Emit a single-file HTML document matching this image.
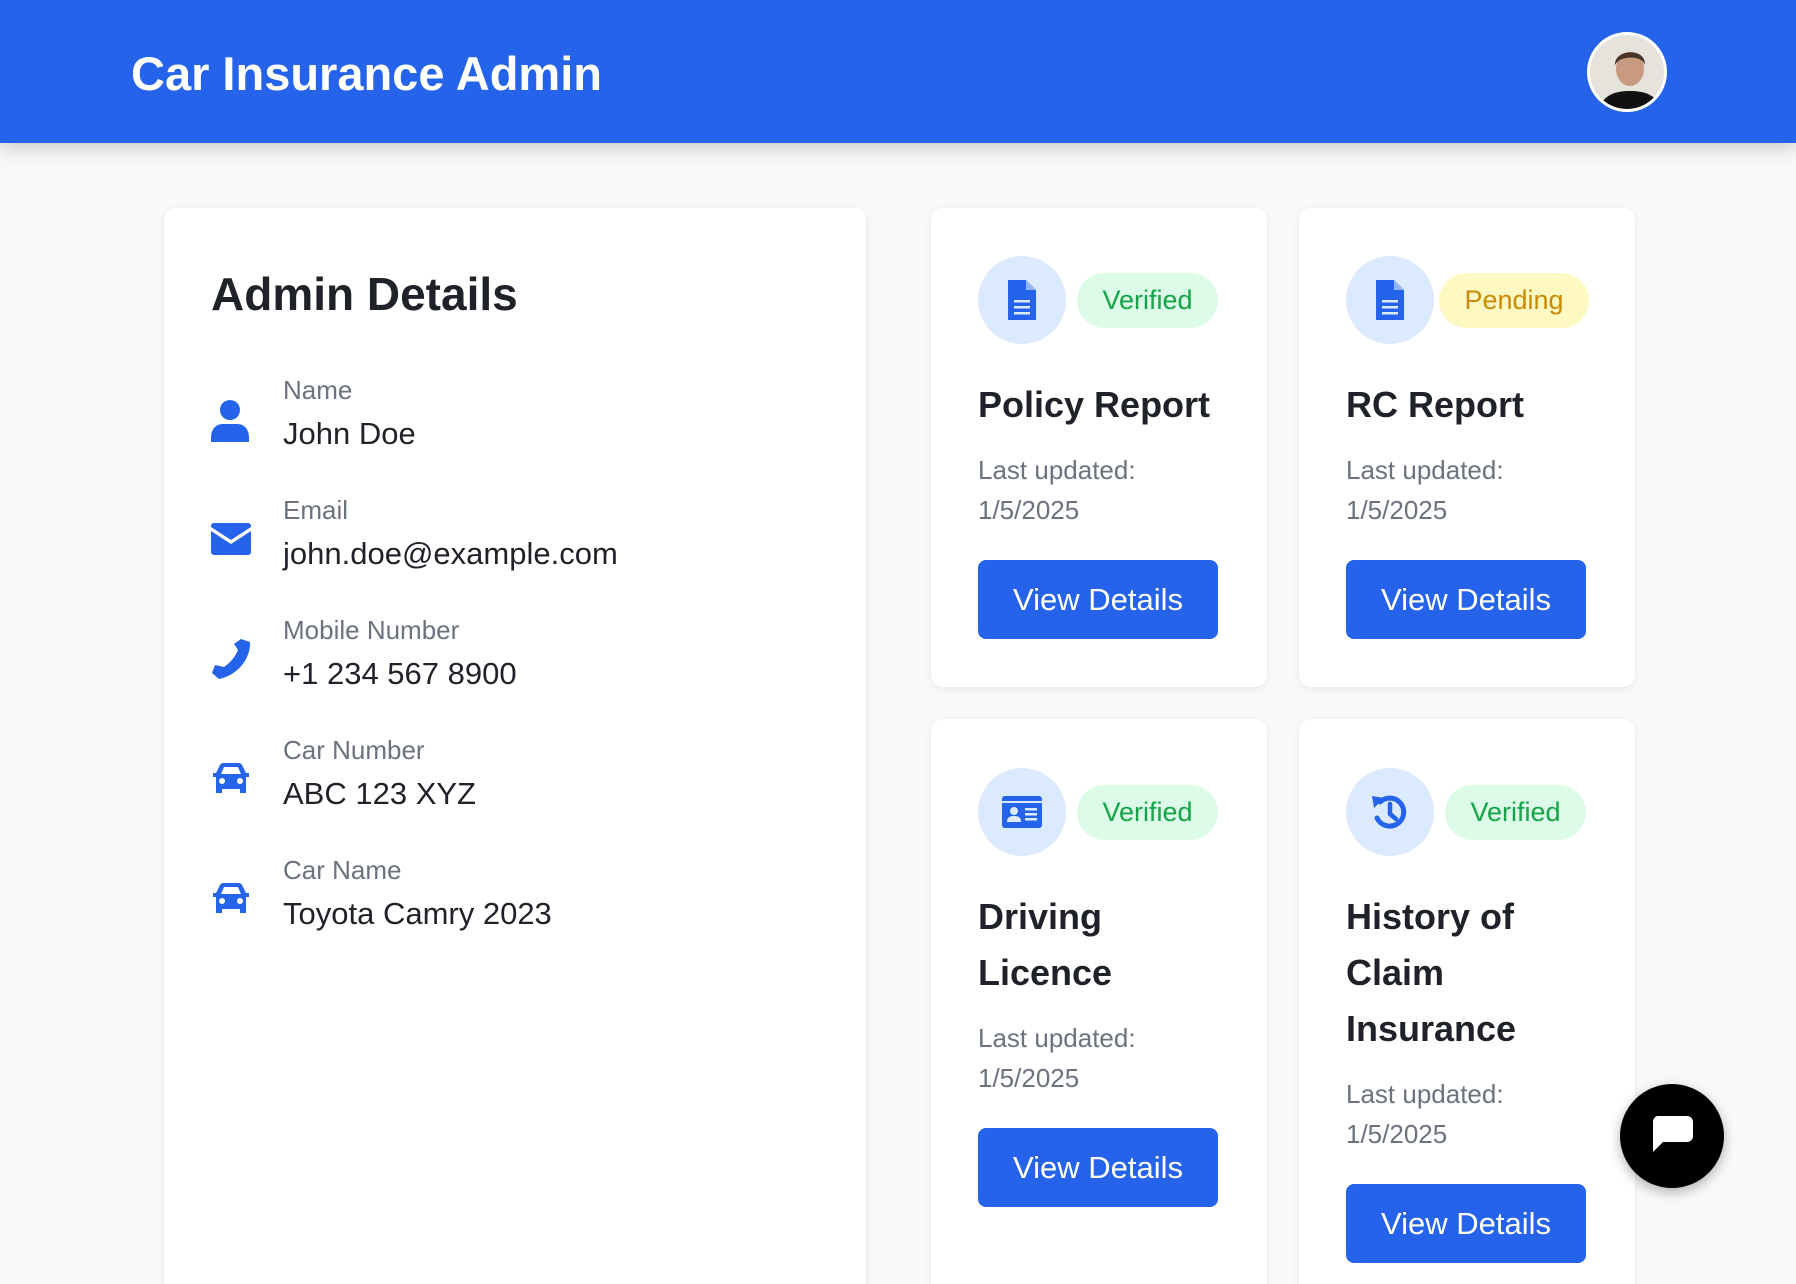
<!DOCTYPE html>
<html><head><meta charset="utf-8"><style>
*{margin:0;padding:0;box-sizing:border-box}
html,body{width:1796px;height:1284px;overflow:hidden}
body{background:#f8f9fb;font-family:"Liberation Sans",sans-serif;position:relative;color:#1f2329}
.hdr{position:absolute;left:0;top:0;width:1796px;height:143px;background:#2563eb;box-shadow:0 6px 18px rgba(0,0,0,.18)}
.hdr h1{position:absolute;left:131px;top:46px;color:#fff;font-size:47px;font-weight:bold;line-height:56px}
.av{position:absolute;left:1587px;top:32px;width:80px;height:80px;border-radius:50%;border:3px solid #fff;background:#e8e4df;overflow:hidden}
.card{position:absolute;background:#fff;border-radius:12px;box-shadow:0 2px 8px rgba(0,0,0,.08)}
.ad h2{position:absolute;left:47px;top:58px;font-size:46px;font-weight:600;line-height:56px}
.row{position:absolute;left:47px}
.row svg{position:absolute;left:0;fill:#2563eb}
.lab{position:absolute;left:72px;font-size:26px;color:#6b7280;white-space:nowrap}
.val{position:absolute;left:72px;font-size:31px;color:#1f2329;white-space:nowrap}
.ic{position:absolute;left:47px;width:88px;height:88px;border-radius:50%;background:#dbeafe}
.ic svg{position:absolute;left:22px;top:22px;fill:#2563eb}
.bd{position:absolute;left:146px;height:55px;border-radius:28px;font-size:27px;line-height:55px;text-align:center;width:141px}
.ok{background:#dcfce7;color:#16a34a}
.pd{background:#fef9c3;color:#ca8a04}
.t{position:absolute;left:47px;font-size:36px;font-weight:600;line-height:56px}
.u{position:absolute;left:47px;font-size:26px;color:#6b7280;line-height:40px}
.btn{position:absolute;left:47px;width:240px;height:79px;background:#2563eb;border-radius:8px;color:#fff;font-size:31px;line-height:79px;text-align:center}
.chat{position:absolute;left:1620px;top:1084px;width:104px;height:104px;border-radius:50%;background:#000;box-shadow:0 4px 12px rgba(0,0,0,.3)}
</style></head><body>
<div class="hdr"><h1>Car Insurance Admin</h1>
<div class="av"><svg width="80" height="80" viewBox="0 0 80 80"><rect width="80" height="80" fill="#e6e2dc"/><path d="M8 80 C10 60 25 56 40 56 C55 56 70 60 72 80Z" fill="#111"/><ellipse cx="40" cy="34" rx="14" ry="17" fill="#c99a82"/><path d="M25 30 C24 14 56 12 55 30 C52 20 30 20 25 30Z" fill="#4a3427"/></svg></div></div>

<div class="card ad" style="left:164px;top:208px;width:702px;height:1090px">
<h2>Admin Details</h2>
<div class="row" style="top:167px"><svg style="top:25px" width="38" height="42" viewBox="0 0 38 42"><circle cx="19" cy="10" r="10"/><path d="M0 38 C0 28 6 24 12 24 H26 C32 24 38 28 38 38 V42 H0Z"/></svg><div class="lab" style="top:0">Name</div><div class="val" style="top:41px">John Doe</div></div>
<div class="row" style="top:287px"><svg style="top:28px" width="40" height="32" viewBox="0 0 40 32"><path d="M3 0H37A3 3 0 0 1 40 3V4L20 17L0 4V3A3 3 0 0 1 3 0Z"/><path d="M0 8L20 21L40 8V29A3 3 0 0 1 37 32H3A3 3 0 0 1 0 29Z"/></svg><div class="lab" style="top:0">Email</div><div class="val" style="top:41px">john.doe@example.com</div></div>
<div class="row" style="top:407px"><svg style="top:24px" width="40" height="40" viewBox="0 0 40 40"><path d="M30 0 L39 3 C40 18 28 36 8 40 L1 34 L4 26 L13 28 C20 23 24 18 27 11 L23 5Z"/></svg><div class="lab" style="top:0">Mobile Number</div><div class="val" style="top:41px">+1 234 567 8900</div></div>
<div class="row" style="top:527px"><svg style="top:28px" width="40" height="32" viewBox="0 0 40 32"><path d="M9 2 C10 0 12 0 14 0 H26 C28 0 30 0 31 2 L35 10 H38 V14 H35 V30 H29 V26 H11 V30 H5 V14 H2 V10 H5Z M10 11 H30 L27 4 H13Z"/><circle cx="11" cy="18" r="3" fill="#fff"/><circle cx="29" cy="18" r="3" fill="#fff"/></svg><div class="lab" style="top:0">Car Number</div><div class="val" style="top:41px">ABC 123 XYZ</div></div>
<div class="row" style="top:647px"><svg style="top:28px" width="40" height="32" viewBox="0 0 40 32"><path d="M9 2 C10 0 12 0 14 0 H26 C28 0 30 0 31 2 L35 10 H38 V14 H35 V30 H29 V26 H11 V30 H5 V14 H2 V10 H5Z M10 11 H30 L27 4 H13Z"/><circle cx="11" cy="18" r="3" fill="#fff"/><circle cx="29" cy="18" r="3" fill="#fff"/></svg><div class="lab" style="top:0">Car Name</div><div class="val" style="top:41px">Toyota Camry 2023</div></div>
</div>

<div class="card" style="left:931px;top:208px;width:336px;height:479px">
<div class="ic" style="top:48px"><svg width="44" height="44" viewBox="0 0 44 44"><path d="M8 2H26L36 12V42H8Z"/><path d="M26 2V12H36" fill="#93b4f5"/><rect x="14" y="22" width="16" height="2.5" fill="#dbeafe"/><rect x="14" y="28" width="16" height="2.5" fill="#dbeafe"/><rect x="14" y="34" width="16" height="2.5" fill="#dbeafe"/></svg></div>
<div class="bd ok" style="top:65px">Verified</div>
<div class="t" style="top:169px">Policy Report</div>
<div class="u" style="top:242px">Last updated:<br>1/5/2025</div>
<div class="btn" style="top:352px">View Details</div></div>

<div class="card" style="left:1299px;top:208px;width:336px;height:479px">
<div class="ic" style="top:48px"><svg width="44" height="44" viewBox="0 0 44 44"><path d="M8 2H26L36 12V42H8Z"/><path d="M26 2V12H36" fill="#93b4f5"/><rect x="14" y="22" width="16" height="2.5" fill="#dbeafe"/><rect x="14" y="28" width="16" height="2.5" fill="#dbeafe"/><rect x="14" y="34" width="16" height="2.5" fill="#dbeafe"/></svg></div>
<div class="bd pd" style="top:65px;left:140px;width:150px">Pending</div>
<div class="t" style="top:169px">RC Report</div>
<div class="u" style="top:242px">Last updated:<br>1/5/2025</div>
<div class="btn" style="top:352px">View Details</div></div>

<div class="card" style="left:931px;top:719px;width:336px;height:580px">
<div class="ic" style="top:49px"><svg width="44" height="44" viewBox="0 0 44 44"><rect x="2" y="6" width="40" height="32" rx="3"/><rect x="2" y="11" width="40" height="2" fill="#dbeafe"/><circle cx="14" cy="21" r="4" fill="#dbeafe"/><path d="M7 32 C7 27 10 26 14 26 C18 26 21 27 21 32Z" fill="#dbeafe"/><rect x="25" y="18" width="12" height="2.5" fill="#dbeafe"/><rect x="25" y="23" width="12" height="2.5" fill="#dbeafe"/><rect x="25" y="28" width="12" height="2.5" fill="#dbeafe"/></svg></div>
<div class="bd ok" style="top:66px">Verified</div>
<div class="t" style="top:170px">Driving<br>Licence</div>
<div class="u" style="top:299px">Last updated:<br>1/5/2025</div>
<div class="btn" style="top:409px">View Details</div></div>

<div class="card" style="left:1299px;top:719px;width:336px;height:580px">
<div class="ic" style="top:49px"><svg width="44" height="44" viewBox="0 0 44 44"><path d="M12 12 A14 14 0 1 1 9 28" fill="none" stroke="#2563eb" stroke-width="5" stroke-linecap="round"/><path d="M4 6 L16 8 L6 18Z"/><path d="M22 14V24L28 29" fill="none" stroke="#2563eb" stroke-width="4.5" stroke-linecap="round"/></svg></div>
<div class="bd ok" style="top:66px">Verified</div>
<div class="t" style="top:170px">History of<br>Claim<br>Insurance</div>
<div class="u" style="top:355px">Last updated:<br>1/5/2025</div>
<div class="btn" style="top:465px">View Details</div></div>

<div class="chat"><svg style="position:absolute;left:31px;top:32px" width="42" height="38" viewBox="0 0 42 38"><path d="M6 0H36A6 6 0 0 1 42 6V20A6 6 0 0 1 36 26H12L2 36V6A6 6 0 0 1 6 0Z" fill="#fff"/></svg></div>
</body></html>
